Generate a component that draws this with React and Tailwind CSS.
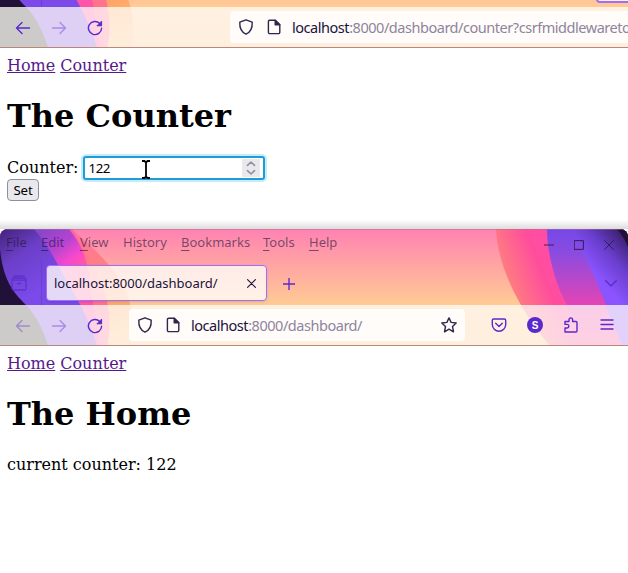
import React from "react";

const ui = "font-['Noto_Sans','Open_Sans',sans-serif]";

function ThemeArt({ id, className, right = true }) {
  const u = (n) => `url(#${id}${n})`;
  return (
    <svg className={className} width="628" height="117" viewBox="0 0 628 117" aria-hidden="true">
      <defs>
        <linearGradient id={id + "base"} x1="0" y1="0" x2="0" y2="1">
          <stop offset="0" stopColor="#ff82b2" />
          <stop offset=".64" stopColor="#ffca94" />
          <stop offset="1" stopColor="#ffc68f" />
        </linearGradient>
        <linearGradient id={id + "lo"} gradientUnits="userSpaceOnUse" x1="70" y1="0" x2="100" y2="117">
          <stop offset="0" stopColor="#ff70a8" />
          <stop offset=".35" stopColor="#ff8080" />
          <stop offset=".7" stopColor="#ffaa68" />
          <stop offset="1" stopColor="#ffc080" />
        </linearGradient>
        <linearGradient id={id + "lp"} gradientUnits="userSpaceOnUse" x1="80" y1="0" x2="80" y2="117">
          <stop offset="0" stopColor="#ff5fa2" />
          <stop offset=".3" stopColor="#ff7c80" />
          <stop offset="1" stopColor="#ff6a98" />
        </linearGradient>
        <linearGradient id={id + "ro"} gradientUnits="userSpaceOnUse" x1="497" y1="50" x2="552" y2="28">
          <stop offset="0" stopColor="#ff8a78" />
          <stop offset=".75" stopColor="#ff4d9d" />
          <stop offset="1" stopColor="#ff4da5" />
        </linearGradient>
        <linearGradient id={id + "mg"} gradientUnits="userSpaceOnUse" x1="45" y1="0" x2="75" y2="40">
          <stop offset="0" stopColor="#8b45cc" />
          <stop offset=".45" stopColor="#b544d0" />
          <stop offset=".8" stopColor="#fa48cc" />
          <stop offset="1" stopColor="#ff55a8" />
        </linearGradient>
        <linearGradient id={id + "pu"} gradientUnits="userSpaceOnUse" x1="0" y1="0" x2="40" y2="60">
          <stop offset="0" stopColor="#43237a" />
          <stop offset=".45" stopColor="#6c3fc8" />
          <stop offset="1" stopColor="#7b4ae8" />
        </linearGradient>
        <linearGradient id={id + "rp"} x1="0" y1="0" x2="0" y2="1">
          <stop offset="0" stopColor="#7648e8" />
          <stop offset=".2" stopColor="#8a4be0" />
          <stop offset=".64" stopColor="#e145b5" />
          <stop offset="1" stopColor="#ff4da0" />
        </linearGradient>
        <linearGradient id={id + "rv"} gradientUnits="userSpaceOnUse" x1="625" y1="8" x2="590" y2="40">
          <stop offset="0" stopColor="#3b2070" />
          <stop offset=".5" stopColor="#6b3fd0" />
          <stop offset="1" stopColor="#8b54ff" />
        </linearGradient>
      </defs>
      <rect width="628" height="117" fill={u("base")} />
      <path d="M0 0H72C92 18 122 44 128 68C135 88 134 103 131 117H0Z" fill={u("lo")} />
      <path d="M0 0H72C84 20 99 48 106 68C110 84 111 102 107 117H0Z" fill={u("lp")} />
      <path d="M0 0H69C80 14 86 26 88 42C90 62 98 95 100 117H0Z" fill={u("mg")} />
      <path d="M0 0H34C50 18 62 44 76 68C86 86 94 104 97 117H0Z" fill={u("pu")} />
      <path d="M0 20C3 50 12 62 26 76C37 88 43 102 48 117H0Z" fill="#211038" />
      <path d="M0 76H26C37 88 43 102 48 117H0Z" fill="#38383a" />
      {right && (
        <g>
          <path d="M496 0C497 24 506 50 521 76C530 92 540 105 550 117H628V0Z" fill={u("ro")} />
          <path d="M547 0C547 25 556 57 567 76C574 92 583 104 588 117H628V0Z" fill={u("rp")} />
          <path d="M572 0C582 20 598 55 606 76C610 90 618 105 622 117H628V0Z" fill={u("rv")} />
          <path d="M617 0Q624 8 628 18V0Z" fill="#211038" />
        </g>
      )}
    </svg>
  );
}

function Icon({ children, className = "", size = 16, w = 1.4 }) {
  return (
    <svg className={"shrink-0 " + className} width={size} height={size} viewBox="0 0 16 16" fill="none" stroke="currentColor" strokeWidth={w} strokeLinecap="round" strokeLinejoin="round">
      {children}
    </svg>
  );
}
const Back = ({ className }) => <Icon className={className}><path d="M1.5 8H14.5M7 2.5L1.5 8L7 13.5" /></Icon>;
const Forward = ({ className }) => <Icon className={className}><path d="M1.5 8H14.5M9 2.5L14.5 8L9 13.5" /></Icon>;
const Reload = () => <Icon className="text-[#592acb]"><path d="M12.8 3.5A6.6 6.6 0 1 0 14.6 8.3" /><path d="M14.6 1.5V5.8H10.3Z" fill="currentColor" strokeWidth="1" /></Icon>;
const Shield = () => <Icon className="text-[#32264c]"><path d="M8 .8L14.2 3.2C14.5 8.6 12.3 13.2 8 15.2C3.7 13.2 1.5 8.6 1.8 3.2Z" /></Icon>;
const Page = () => <Icon className="text-[#32264c]"><path d="M3.7 1.2H9.2L13.8 5.8V13.3A1.3 1.3 0 0 1 12.5 14.6H3.7A1.3 1.3 0 0 1 2.4 13.3V2.5A1.3 1.3 0 0 1 3.7 1.2Z" /><path d="M9.2 1.2V5.8H13.8Z" fill="currentColor" /></Icon>;

function NavIcons({ backClass }) {
  return (
    <div className="flex w-[103px] shrink-0 items-center gap-5 pl-[15px] pt-px">
      <Back className={backClass} />
      <Forward className="text-[#592acb]/40" />
      <Reload />
    </div>
  );
}

function Links() {
  return (
    <p className="flex h-[19px] gap-[5px] text-base leading-[19px] text-[#551a8b]">
      <a className="underline">Home</a>
      <a className="underline">Counter</a>
    </p>
  );
}

function Menu({ before = "", k, after, className }) {
  return (
    <span className={"shrink-0 whitespace-nowrap " + className}>
      {before}<span className="underline underline-offset-[3px]">{k}</span>{after}
    </span>
  );
}

export default function App() {
  return (
    <div className="flex h-[573px] w-[628px] flex-col overflow-hidden bg-white font-['DejaVu_Serif',serif] text-black">
      <section className="flex h-[229px] shrink-0 flex-col bg-linear-to-b from-white from-96% to-[#dcdcdc]">
        <header className="relative isolate flex h-12 shrink-0 flex-col overflow-hidden border-b border-[#ba8878]">
          <ThemeArt id="a" right={false} className="absolute -top-[69px] left-0 -z-10" />
          <div className="flex h-[7px] shrink-0 justify-between overflow-hidden">
            <div className="ml-[41px] h-full w-px bg-[#592acb]/40" />
            <div className="-mr-2 -mt-3 h-[15px] w-10 rounded border-2 border-[#a06cff] bg-[#fff0e8]" />
          </div>
          <div className="flex h-10 items-center bg-[#fffcfa]/75">
            <NavIcons backClass="text-[#592acb]" />
            <div className="ml-[127px] flex h-8 w-[400px] shrink-0 items-center rounded-l bg-[#fffcfa] pl-2">
              <Shield />
              <div className="w-3 shrink-0" />
              <Page />
              <span className={ui + " ml-[10px] whitespace-nowrap pt-0.5 text-[14.5px] tracking-[-0.46px] text-[#8f849d]"}>
                <span className="text-[#20123a]">localhost</span>:8000/dashboard/counter?csrfmiddlewareto
              </span>
            </div>
          </div>
        </header>
        <main className="flex flex-col px-[7px] pt-2">
          <Links />
          <h1 className="mt-[22px] h-[38px] text-[32px] font-bold leading-[38px]">The Counter</h1>
          <form className="mt-[21px] flex flex-col items-start">
            <label className="flex h-6 items-center text-base">
              <span>Counter:</span>
              <span className={ui + " relative ml-[5px] flex h-6 w-[182px] items-center justify-between rounded-[3px] border-2 border-[#209bd6] bg-white pl-[3px] pr-[3px] text-[13.3px] ring-2 ring-[#c5ecfb]"}>
                <span className="pt-0.5 tracking-[-0.4px]">122</span>
                <span className="flex h-[18px] w-[18px] items-center justify-center bg-[#e9e9ed] text-[#8f8f9d]">
                  <Icon size={14} w={1.8}><path d="M4 5L8 1.2L12 5M4 11L8 14.8L12 11" /></Icon>
                </span>
                <svg className="absolute left-[56px] top-0.5" width="10" height="19" viewBox="0 0 10 19" fill="none" stroke="#000" strokeWidth="1.8">
                  <path d="M1 1H3.5L5 2.5L6.5 1H9M5 2V17M1 18H3.5L5 16.5L6.5 18H9" />
                </svg>
              </span>
            </label>
            <span className={ui + " -mt-px flex h-[22px] w-8 items-center justify-center rounded border border-[#8f8f9d] bg-[#e9e9ed] pt-px text-[13.3px] tracking-[-0.2px]"}>Set</span>
          </form>
        </main>
      </section>

      <section className="flex flex-1 flex-col">
        <header className="relative isolate flex h-[117px] shrink-0 flex-col overflow-hidden rounded-t-lg border-b border-[#ba8878]">
          <ThemeArt id="b" className="absolute left-0 top-0 -z-10" />
          <div className="absolute inset-x-0 top-0 h-px bg-[#b06d91]/50" />
          <div className={ui + " flex h-8 shrink-0 items-center pb-[5px] text-[13px] text-[#20123a]/60"}>
            <Menu k="F" after="ile" className="ml-[6px] w-[35px]" />
            <Menu k="E" after="dit" className="w-[39px]" />
            <Menu k="V" after="iew" className="w-[43px]" />
            <Menu before="Hi" k="s" after="tory" className="w-[58px]" />
            <Menu k="B" after="ookmarks" className="w-[82px]" />
            <Menu k="T" after="ools" className="w-[46px]" />
            <Menu k="H" after="elp" className="w-[40px]" />
            <div className="ml-auto mr-[14px] flex items-center gap-5 pt-1 text-[#20123a]/80">
              <Icon size={10} w={1.6}><path d="M0 8H16" /></Icon>
              <Icon size={10} w={1.6}><path d="M1 1H15V15H1Z" /></Icon>
              <Icon size={10} w={1.4}><path d="M1 1L15 15M15 1L1 15" /></Icon>
            </div>
          </div>
          <div className="flex h-11 shrink-0 items-center">
            <Icon className="ml-[11px] text-[#592acb]/80" w={1.3}><path d="M1 5.2H15V13.5A1.5 1.5 0 0 1 13.5 15H2.5A1.5 1.5 0 0 1 1 13.5ZM1 5.2V4.5A1.5 1.5 0 0 1 2.5 3H13.5A1.5 1.5 0 0 1 15 4.5V5.2M3 1H13M6.5 8.5H9.5" /></Icon>
            <div className="ml-[14px] h-full w-px bg-[#592acb]/40" />
            <div className="ml-[4px] flex h-9 w-[221px] items-center rounded border border-[#a06cff] bg-[#fffcfa]/80 pl-[7px] pr-[10px] shadow-sm">
              <span className={ui + " pt-0.5 text-[13px] text-[#20123a]"}>localhost:8000/dashboard/</span>
              <Icon size={9} w={2} className="ml-auto text-[#20123a]"><path d="M1 1L15 15M15 1L1 15" /></Icon>
            </div>
            <Icon size={12} w={1.8} className="ml-[15.5px] mt-px text-[#592acb]"><path d="M8 0V16M0 8H16" /></Icon>
            <Icon size={12} w={1.6} className="ml-auto mr-[11px] text-[#592acb]"><path d="M1 5L8 12L15 5" /></Icon>
          </div>
          <div className="flex h-10 shrink-0 items-center bg-[#fffcfa]/75">
            <NavIcons backClass="text-[#592acb]/40" />
            <div className="ml-[26px] flex h-8 w-[336px] shrink-0 items-center rounded bg-[#fffcfa] pl-2 pr-2">
              <Shield />
              <div className="w-3 shrink-0" />
              <Page />
              <span className={ui + " ml-[10px] whitespace-nowrap pt-0.5 text-[14.5px] tracking-[-0.46px] text-[#8f849d]"}>
                <span className="text-[#20123a]">localhost</span>:8000/dashboard/
              </span>
              <Icon className="ml-auto text-[#32264c]"><path d="M8 .9L10.1 5.4L15.2 6L11.5 9.5L12.5 14.8L8 12.2L3.5 14.8L4.5 9.5L.8 6L5.9 5.4Z" /></Icon>
            </div>
            <div className="ml-[26px] flex items-center gap-5 text-[#592acb]">
              <Icon><path d="M2.5 2H13.5A1.3 1.3 0 0 1 14.7 3.2V7.5A6.7 6.7 0 0 1 1.3 7.5V3.2A1.3 1.3 0 0 1 2.5 2ZM4.7 6.3L8 9.4L11.3 6.3" /></Icon>
              <span className="flex size-4 items-center justify-center rounded-full bg-[#592acb] font-['Liberation_Sans',sans-serif] text-[10px] font-bold text-white">S</span>
              <Icon><path d="M2 15V11H4A1.8 1.8 0 0 0 4 7.4H2V4.5H6V2.7A1.8 1.8 0 0 1 9.6 2.7V4.5H13A1 1 0 0 1 14 5.5V14A1 1 0 0 1 13 15Z" /></Icon>
              <Icon><path d="M2 3H14M2 7.5H14M2 12H14" /></Icon>
            </div>
          </div>
        </header>
        <main className="flex flex-col px-[7px] pt-2">
          <Links />
          <h1 className="mt-[22px] h-[38px] text-[32px] font-bold leading-[38px]">The Home</h1>
          <p className="mt-[22px] text-base leading-[19px]">current counter: 122</p>
        </main>
      </section>
    </div>
  );
}
